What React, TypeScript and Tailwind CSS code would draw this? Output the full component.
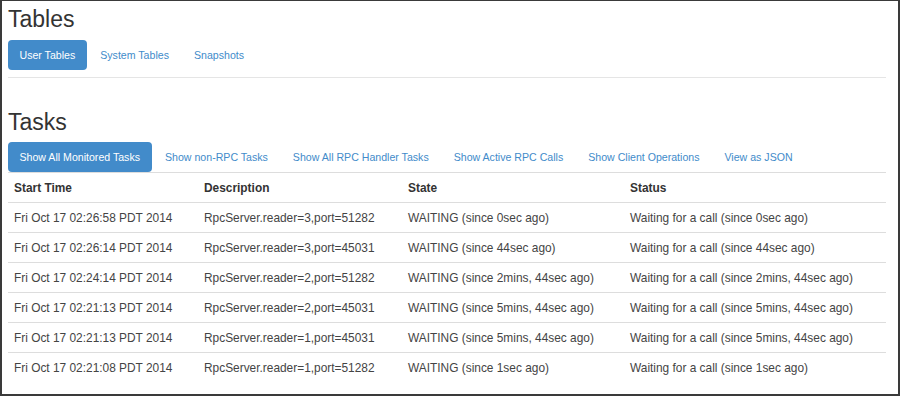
import React, { FC } from 'react';

type Task = {
    start: string;
    description: string;
    state: string;
    status: string;
};

const tasks: Task[] = [
    { start: 'Fri Oct 17 02:26:58 PDT 2014', description: 'RpcServer.reader=3,port=51282', state: 'WAITING (since 0sec ago)', status: 'Waiting for a call (since 0sec ago)' },
    { start: 'Fri Oct 17 02:26:14 PDT 2014', description: 'RpcServer.reader=3,port=45031', state: 'WAITING (since 44sec ago)', status: 'Waiting for a call (since 44sec ago)' },
    { start: 'Fri Oct 17 02:24:14 PDT 2014', description: 'RpcServer.reader=2,port=51282', state: 'WAITING (since 2mins, 44sec ago)', status: 'Waiting for a call (since 2mins, 44sec ago)' },
    { start: 'Fri Oct 17 02:21:13 PDT 2014', description: 'RpcServer.reader=2,port=45031', state: 'WAITING (since 5mins, 44sec ago)', status: 'Waiting for a call (since 5mins, 44sec ago)' },
    { start: 'Fri Oct 17 02:21:13 PDT 2014', description: 'RpcServer.reader=1,port=45031', state: 'WAITING (since 5mins, 44sec ago)', status: 'Waiting for a call (since 5mins, 44sec ago)' },
    { start: 'Fri Oct 17 02:21:08 PDT 2014', description: 'RpcServer.reader=1,port=51282', state: 'WAITING (since 1sec ago)', status: 'Waiting for a call (since 1sec ago)' },
];

const Pills: FC<{ items: string[] }> = ({ items }) => (
    <ul className="flex">
        {items.map((item, i) => (
            <li key={item} className={i > 0 ? 'ml-[2px]' : ''}>
                <a
                    href="#"
                    className={
                        i === 0
                            ? 'block rounded-[4px] bg-[#428bca] px-[11.5px] py-[7px] text-[10.6px] leading-[16px] text-white'
                            : 'block rounded-[4px] px-[11.5px] py-[7px] text-[10.6px] leading-[16px] text-[#428bca]'
                    }
                >
                    {item}
                </a>
            </li>
        ))}
    </ul>
);

const App: FC = () => {
    return (
        <div
            className="box-border h-[396px] w-[900px] overflow-hidden border-2 border-t border-[#3a3a3a] bg-white px-[6px] pt-[6px] text-[#333]"
            style={{ fontFamily: '"Liberation Sans", Arial, sans-serif' }}
        >
            <h2 className="text-[23px] leading-[24px]">Tables</h2>
            <div className="mt-[9px]">
                <Pills items={['User Tables', 'System Tables', 'Snapshots']} />
            </div>
            <hr className="mt-[7px] w-[878px] border-t border-[#e5e5e5]" />
            <h2 className="mt-[32px] text-[23px] leading-[24px]">Tasks</h2>
            <div className="mt-[8px]">
                <Pills
                    items={[
                        'Show All Monitored Tasks',
                        'Show non-RPC Tasks',
                        'Show All RPC Handler Tasks',
                        'Show Active RPC Calls',
                        'Show Client Operations',
                        'View as JSON',
                    ]}
                />
            </div>
            <table className="w-[878px] table-fixed border-collapse text-left text-[11.9px] leading-[16px]">
                <thead>
                    <tr className="h-[30px] border-t border-b border-[#ddd]">
                        <th className="w-[190px] px-[6px] font-bold">Start Time</th>
                        <th className="w-[204px] px-[6px] font-bold">Description</th>
                        <th className="w-[222px] px-[6px] font-bold">State</th>
                        <th className="px-[6px] font-bold">Status</th>
                    </tr>
                </thead>
                <tbody className="text-[#444]">
                    {tasks.map((t, i) => (
                        <tr key={i} className={i > 0 ? 'h-[30px] border-t border-[#ddd]' : 'h-[30px]'}>
                            <td className="whitespace-nowrap px-[6px]">{t.start}</td>
                            <td className="whitespace-nowrap px-[6px]">{t.description}</td>
                            <td className="whitespace-nowrap px-[6px]">{t.state}</td>
                            <td className="whitespace-nowrap px-[6px]">{t.status}</td>
                        </tr>
                    ))}
                </tbody>
            </table>
        </div>
    );
};

export default App;
